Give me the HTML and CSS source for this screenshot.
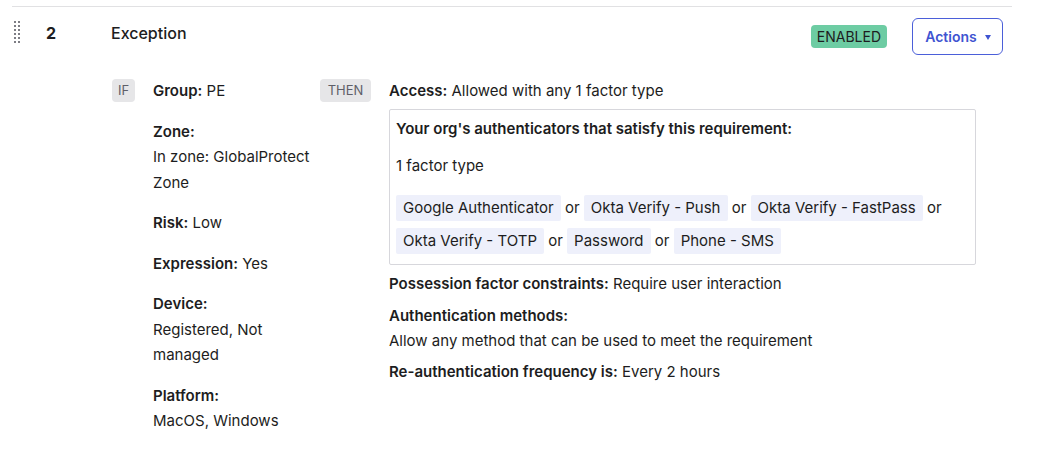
FILE: index.html
```html
<!DOCTYPE html>
<html>
<head>
<meta charset="utf-8">
<link rel="stylesheet" href="styles.css">
</head>
<body>
<div class="rule">
  <div class="rule-head">
    <div class="handle">
      <svg width="6" height="22" viewBox="0 0 6 22">
        <g fill="#7d7d84">
          <rect x="0" y="0" width="2" height="2"/><rect x="4" y="0" width="2" height="2"/>
          <rect x="0" y="4" width="2" height="2"/><rect x="4" y="4" width="2" height="2"/>
          <rect x="0" y="8" width="2" height="2"/><rect x="4" y="8" width="2" height="2"/>
          <rect x="0" y="12" width="2" height="2"/><rect x="4" y="12" width="2" height="2"/>
          <rect x="0" y="16" width="2" height="2"/><rect x="4" y="16" width="2" height="2"/>
          <rect x="0" y="20" width="2" height="2"/><rect x="4" y="20" width="2" height="2"/>
        </g>
      </svg>
    </div>
    <div class="num">2</div>
    <div class="title">Exception</div>
    <div class="spacer"></div>
    <span class="status">ENABLED</span>
    <button class="actions">Actions <span class="caret"></span></button>
  </div>
  <div class="rule-body">
    <span class="tag tag-if">IF</span>
    <div class="conds">
      <div class="cond"><b>Group:</b> PE</div>
      <div class="cond"><b>Zone:</b><br>In zone: GlobalProtect Zone</div>
      <div class="cond"><b>Risk:</b> Low</div>
      <div class="cond"><b>Expression:</b> Yes</div>
      <div class="cond"><b>Device:</b><br>Registered, Not managed</div>
      <div class="cond"><b>Platform:</b><br>MacOS, Windows</div>
    </div>
    <span class="tag tag-then">THEN</span>
    <div class="result">
      <div class="line"><b>Access:</b> Allowed with any 1 factor type</div>
      <div class="authbox">
        <div class="line"><b>Your org's authenticators that satisfy this requirement:</b></div>
        <div class="line gap">1 factor type</div>
        <div class="chips"><span class="chip">Google Authenticator</span> or <span class="chip">Okta Verify - Push</span> or <span class="chip">Okta Verify - FastPass</span> or <span class="chip">Okta Verify - TOTP</span> or <span class="chip">Password</span> or <span class="chip">Phone - SMS</span></div>
      </div>
      <div class="line m6"><b>Possession factor constraints:</b> Require user interaction</div>
      <div class="line m7"><b>Authentication methods:</b></div>
      <div class="line">Allow any method that can be used to meet the requirement</div>
      <div class="line m6"><b>Re-authentication frequency is:</b> Every 2 hours</div>
    </div>
  </div>
</div>
</body>
</html>
```

FILE: styles.css
```css
* { box-sizing: border-box; }
html, body { margin: 0; padding: 0; background: #fff; }
body {
  font-family: Inter, "Noto Sans", sans-serif;
  font-size: 15px;
  color: #1d1d21;
  padding-top: 6px;
}
b { font-weight: 600; }

.rule {
  margin-left: 12px;
  width: 1000px;
  border-top: 1px solid #e1e1e3;
}

.rule-head {
  display: flex;
  align-items: flex-start;
  padding-top: 11px;
  padding-right: 9px;
}
.handle {
  margin-left: 2px;
  margin-top: 3px;
  width: 6px;
  height: 22px;
  display: flex;
}
.num {
  margin-left: 26px;
  width: 65px;
  margin-top: 3px;
  line-height: 24px;
  font-size: 16px;
  font-weight: 700;
}
.title {
  margin-top: 3px;
  line-height: 24px;
  font-size: 16px;
  font-weight: 500;
}
.spacer { flex: 1; }
.status {
  margin-top: 7px;
  height: 23px;
  line-height: 23px;
  padding: 0 6px;
  background: #6dcca3;
  border-radius: 4px;
  color: #1d1d21;
  font-size: 14px;
}
.actions {
  margin-left: 25px;
  width: 91px;
  height: 37px;
  border: 1px solid #4b5fd9;
  border-radius: 6px;
  background: #fff;
  color: #3f54d1;
  font-family: inherit;
  font-size: 14px;
  font-weight: 600;
  padding: 0 0 0 1px;
  display: flex;
  align-items: center;
  justify-content: center;
  gap: 8px;
}
.caret {
  width: 0;
  height: 0;
  border-left: 3px solid transparent;
  border-right: 3px solid transparent;
  border-top: 5px solid #3f54d1;
  margin-top: 1px;
}

.rule-body {
  display: flex;
  align-items: flex-start;
  padding-left: 100px;
  margin-top: 23px;
}
.tag {
  height: 23px;
  line-height: 23px;
  text-align: center;
  background: #e6e6e8;
  border-radius: 4px;
  color: #5f5f68;
  font-size: 13px;
  margin-top: 1px;
}
.tag-if { width: 23px; margin-right: 18px; }
.tag-then { width: 51px; margin-left: 7px; margin-right: 18px; }

.conds { width: 160px; }
.cond { margin-bottom: 15px; line-height: 25.5px; }

.result { width: 587px; }
.line { line-height: 25px; }
.authbox {
  margin-top: 6px;
  border: 1px solid #d7d7dc;
  border-radius: 2px;
  padding: 6px 6px 7px 6px;
}
.gap { margin-top: 12px; }
.chips {
  margin-top: 13px;
  line-height: 33px;
}
.chip {
  background: #eef0fb;
  padding: 3px 7px 4px;
  border-radius: 2px;
}
.m6 { margin-top: 6px; }
.m7 { margin-top: 7px; }
```
